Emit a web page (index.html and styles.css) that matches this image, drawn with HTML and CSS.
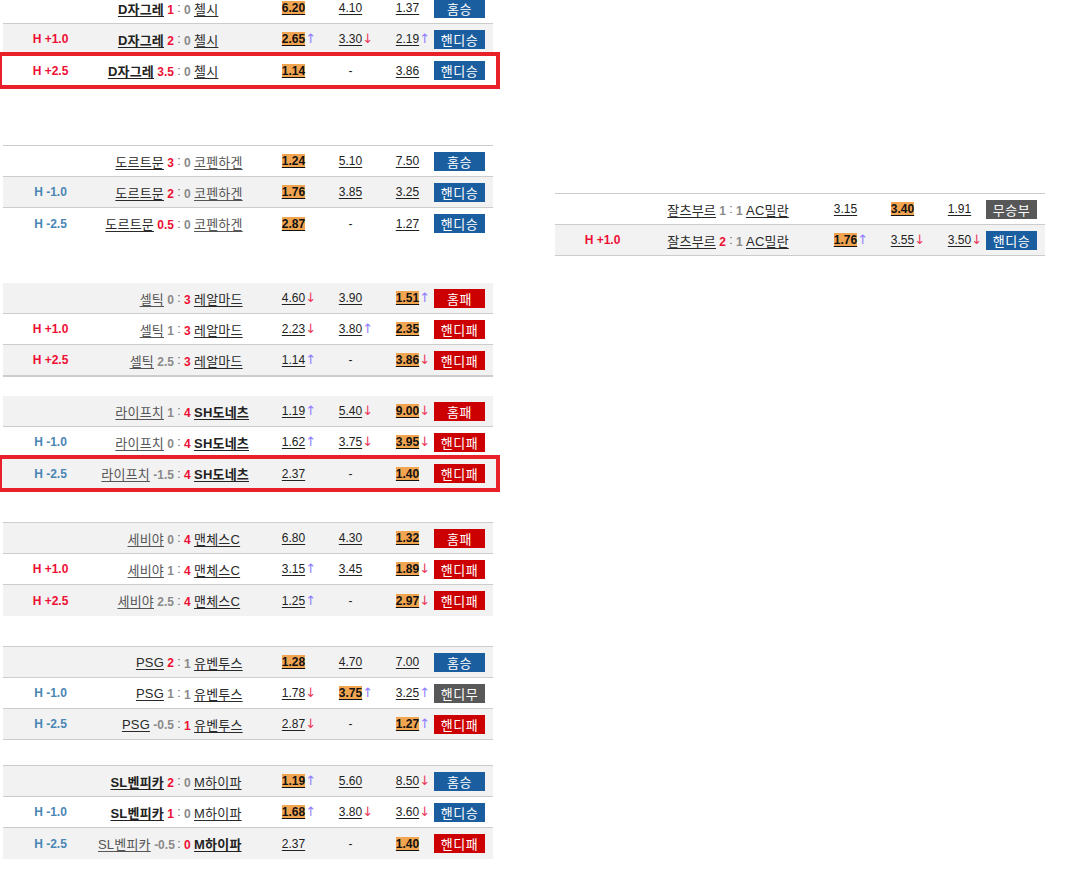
FILE: index.html
```html
<!DOCTYPE html>
<html lang="ko">
<head>
<meta charset="utf-8">
<title>경기 결과</title>
<link rel="stylesheet" href="styles.css">
</head>
<body>
<div class="page">
  <div class="col-left">

    <div class="blk blk-dz">
      <div class="row">
        <div class="hcap"></div>
        <div class="home"><span class="team w">D자그레</span> <b class="sc win">1</b></div>
        <div class="colon">:</div>
        <div class="away"><b class="sc">0</b> <span class="team">첼시</span></div>
        <div class="odd"><span class="v hl">6.20</span></div>
        <div class="odd"><span class="v">4.10</span></div>
        <div class="odd"><span class="v">1.37</span></div>
        <div class="res"><span class="badge blue">홈승</span></div>
      </div>
      <div class="row alt">
        <div class="hcap plus">H +1.0</div>
        <div class="home"><span class="team w">D자그레</span> <b class="sc win">2</b></div>
        <div class="colon">:</div>
        <div class="away"><b class="sc">0</b> <span class="team">첼시</span></div>
        <div class="odd"><span class="v hl">2.65</span><span class="up">↑</span></div>
        <div class="odd"><span class="v">3.30</span><span class="dn">↓</span></div>
        <div class="odd"><span class="v">2.19</span><span class="up">↑</span></div>
        <div class="res"><span class="badge blue">핸디승</span></div>
      </div>
      <div class="row last boxed">
        <div class="hcap plus">H +2.5</div>
        <div class="home"><span class="team w">D자그레</span> <b class="sc win">3.5</b></div>
        <div class="colon">:</div>
        <div class="away"><b class="sc">0</b> <span class="team">첼시</span></div>
        <div class="odd"><span class="v hl">1.14</span></div>
        <div class="odd"><span class="dash">-</span></div>
        <div class="odd"><span class="v">3.86</span></div>
        <div class="res"><span class="badge blue">핸디승</span></div>
      </div>
    </div>

    <div class="blk blk-dort">
      <div class="row">
        <div class="hcap"></div>
        <div class="home"><span class="team">도르트문</span> <b class="sc win">3</b></div>
        <div class="colon">:</div>
        <div class="away"><b class="sc">0</b> <span class="team lose">코펜하겐</span></div>
        <div class="odd"><span class="v hl">1.24</span></div>
        <div class="odd"><span class="v">5.10</span></div>
        <div class="odd"><span class="v">7.50</span></div>
        <div class="res"><span class="badge blue">홈승</span></div>
      </div>
      <div class="row alt">
        <div class="hcap minus">H -1.0</div>
        <div class="home"><span class="team">도르트문</span> <b class="sc win">2</b></div>
        <div class="colon">:</div>
        <div class="away"><b class="sc">0</b> <span class="team lose">코펜하겐</span></div>
        <div class="odd"><span class="v hl">1.76</span></div>
        <div class="odd"><span class="v">3.85</span></div>
        <div class="odd"><span class="v">3.25</span></div>
        <div class="res"><span class="badge blue">핸디승</span></div>
      </div>
      <div class="row last">
        <div class="hcap minus">H -2.5</div>
        <div class="home"><span class="team">도르트문</span> <b class="sc win">0.5</b></div>
        <div class="colon">:</div>
        <div class="away"><b class="sc">0</b> <span class="team lose">코펜하겐</span></div>
        <div class="odd"><span class="v hl">2.87</span></div>
        <div class="odd"><span class="dash">-</span></div>
        <div class="odd"><span class="v">1.27</span></div>
        <div class="res"><span class="badge blue">핸디승</span></div>
      </div>
    </div>

    <div class="blk blk-celtic">
      <div class="row alt">
        <div class="hcap"></div>
        <div class="home"><span class="team lose">셀틱</span> <b class="sc">0</b></div>
        <div class="colon">:</div>
        <div class="away"><b class="sc win">3</b> <span class="team">레알마드</span></div>
        <div class="odd"><span class="v">4.60</span><span class="dn">↓</span></div>
        <div class="odd"><span class="v">3.90</span></div>
        <div class="odd"><span class="v hl">1.51</span><span class="up">↑</span></div>
        <div class="res"><span class="badge red">홈패</span></div>
      </div>
      <div class="row">
        <div class="hcap plus">H +1.0</div>
        <div class="home"><span class="team lose">셀틱</span> <b class="sc">1</b></div>
        <div class="colon">:</div>
        <div class="away"><b class="sc win">3</b> <span class="team">레알마드</span></div>
        <div class="odd"><span class="v">2.23</span><span class="dn">↓</span></div>
        <div class="odd"><span class="v">3.80</span><span class="up">↑</span></div>
        <div class="odd"><span class="v hl">2.35</span></div>
        <div class="res"><span class="badge red">핸디패</span></div>
      </div>
      <div class="row alt thick">
        <div class="hcap plus">H +2.5</div>
        <div class="home"><span class="team lose">셀틱</span> <b class="sc">2.5</b></div>
        <div class="colon">:</div>
        <div class="away"><b class="sc win">3</b> <span class="team">레알마드</span></div>
        <div class="odd"><span class="v">1.14</span><span class="up">↑</span></div>
        <div class="odd"><span class="dash">-</span></div>
        <div class="odd"><span class="v hl">3.86</span><span class="dn">↓</span></div>
        <div class="res"><span class="badge red">핸디패</span></div>
      </div>
    </div>

    <div class="blk blk-leip">
      <div class="row alt">
        <div class="hcap"></div>
        <div class="home"><span class="team lose">라이프치</span> <b class="sc">1</b></div>
        <div class="colon">:</div>
        <div class="away"><b class="sc win">4</b> <span class="team w">SH도네츠</span></div>
        <div class="odd"><span class="v">1.19</span><span class="up">↑</span></div>
        <div class="odd"><span class="v">5.40</span><span class="dn">↓</span></div>
        <div class="odd"><span class="v hl">9.00</span><span class="dn">↓</span></div>
        <div class="res"><span class="badge red">홈패</span></div>
      </div>
      <div class="row">
        <div class="hcap minus">H -1.0</div>
        <div class="home"><span class="team lose">라이프치</span> <b class="sc">0</b></div>
        <div class="colon">:</div>
        <div class="away"><b class="sc win">4</b> <span class="team w">SH도네츠</span></div>
        <div class="odd"><span class="v">1.62</span><span class="up">↑</span></div>
        <div class="odd"><span class="v">3.75</span><span class="dn">↓</span></div>
        <div class="odd"><span class="v hl">3.95</span><span class="dn">↓</span></div>
        <div class="res"><span class="badge red">핸디패</span></div>
      </div>
      <div class="row alt last boxed">
        <div class="hcap minus">H -2.5</div>
        <div class="home"><span class="team lose">라이프치</span> <b class="sc">-1.5</b></div>
        <div class="colon">:</div>
        <div class="away"><b class="sc win">4</b> <span class="team w">SH도네츠</span></div>
        <div class="odd"><span class="v">2.37</span></div>
        <div class="odd"><span class="dash">-</span></div>
        <div class="odd"><span class="v hl">1.40</span></div>
        <div class="res"><span class="badge red">핸디패</span></div>
      </div>
    </div>

    <div class="blk blk-sev">
      <div class="row alt">
        <div class="hcap"></div>
        <div class="home"><span class="team lose">세비야</span> <b class="sc">0</b></div>
        <div class="colon">:</div>
        <div class="away"><b class="sc win">4</b> <span class="team">맨체스C</span></div>
        <div class="odd"><span class="v">6.80</span></div>
        <div class="odd"><span class="v">4.30</span></div>
        <div class="odd"><span class="v hl">1.32</span></div>
        <div class="res"><span class="badge red">홈패</span></div>
      </div>
      <div class="row">
        <div class="hcap plus">H +1.0</div>
        <div class="home"><span class="team lose">세비야</span> <b class="sc">1</b></div>
        <div class="colon">:</div>
        <div class="away"><b class="sc win">4</b> <span class="team">맨체스C</span></div>
        <div class="odd"><span class="v">3.15</span><span class="up">↑</span></div>
        <div class="odd"><span class="v">3.45</span></div>
        <div class="odd"><span class="v hl">1.89</span><span class="dn">↓</span></div>
        <div class="res"><span class="badge red">핸디패</span></div>
      </div>
      <div class="row alt last">
        <div class="hcap plus">H +2.5</div>
        <div class="home"><span class="team lose">세비야</span> <b class="sc">2.5</b></div>
        <div class="colon">:</div>
        <div class="away"><b class="sc win">4</b> <span class="team">맨체스C</span></div>
        <div class="odd"><span class="v">1.25</span><span class="up">↑</span></div>
        <div class="odd"><span class="dash">-</span></div>
        <div class="odd"><span class="v hl">2.97</span><span class="dn">↓</span></div>
        <div class="res"><span class="badge red">핸디패</span></div>
      </div>
    </div>

    <div class="blk blk-psg">
      <div class="row alt">
        <div class="hcap"></div>
        <div class="home"><span class="team">PSG</span> <b class="sc win">2</b></div>
        <div class="colon">:</div>
        <div class="away"><b class="sc">1</b> <span class="team">유벤투스</span></div>
        <div class="odd"><span class="v hl">1.28</span></div>
        <div class="odd"><span class="v">4.70</span></div>
        <div class="odd"><span class="v">7.00</span></div>
        <div class="res"><span class="badge blue">홈승</span></div>
      </div>
      <div class="row">
        <div class="hcap minus">H -1.0</div>
        <div class="home"><span class="team">PSG</span> <b class="sc">1</b></div>
        <div class="colon">:</div>
        <div class="away"><b class="sc">1</b> <span class="team">유벤투스</span></div>
        <div class="odd"><span class="v">1.78</span><span class="dn">↓</span></div>
        <div class="odd"><span class="v hl">3.75</span><span class="up">↑</span></div>
        <div class="odd"><span class="v">3.25</span><span class="up">↑</span></div>
        <div class="res"><span class="badge gray">핸디무</span></div>
      </div>
      <div class="row alt">
        <div class="hcap minus">H -2.5</div>
        <div class="home"><span class="team">PSG</span> <b class="sc">-0.5</b></div>
        <div class="colon">:</div>
        <div class="away"><b class="sc win">1</b> <span class="team">유벤투스</span></div>
        <div class="odd"><span class="v">2.87</span><span class="dn">↓</span></div>
        <div class="odd"><span class="dash">-</span></div>
        <div class="odd"><span class="v hl">1.27</span><span class="up">↑</span></div>
        <div class="res"><span class="badge red">핸디패</span></div>
      </div>
    </div>

    <div class="blk blk-ben">
      <div class="row alt">
        <div class="hcap"></div>
        <div class="home"><span class="team w">SL벤피카</span> <b class="sc win">2</b></div>
        <div class="colon">:</div>
        <div class="away"><b class="sc">0</b> <span class="team">M하이파</span></div>
        <div class="odd"><span class="v hl">1.19</span><span class="up">↑</span></div>
        <div class="odd"><span class="v">5.60</span></div>
        <div class="odd"><span class="v">8.50</span><span class="dn">↓</span></div>
        <div class="res"><span class="badge blue">홈승</span></div>
      </div>
      <div class="row">
        <div class="hcap minus">H -1.0</div>
        <div class="home"><span class="team w">SL벤피카</span> <b class="sc win">1</b></div>
        <div class="colon">:</div>
        <div class="away"><b class="sc">0</b> <span class="team">M하이파</span></div>
        <div class="odd"><span class="v hl">1.68</span><span class="up">↑</span></div>
        <div class="odd"><span class="v">3.80</span><span class="dn">↓</span></div>
        <div class="odd"><span class="v">3.60</span><span class="dn">↓</span></div>
        <div class="res"><span class="badge blue">핸디승</span></div>
      </div>
      <div class="row alt last">
        <div class="hcap minus">H -2.5</div>
        <div class="home"><span class="team lose">SL벤피카</span> <b class="sc">-0.5</b></div>
        <div class="colon">:</div>
        <div class="away"><b class="sc win">0</b> <span class="team w">M하이파</span></div>
        <div class="odd"><span class="v">2.37</span></div>
        <div class="odd"><span class="dash">-</span></div>
        <div class="odd"><span class="v hl">1.40</span></div>
        <div class="res"><span class="badge red">핸디패</span></div>
      </div>
    </div>

  </div>

  <div class="col-right">
    <div class="blk blk-salz">
      <div class="row">
        <div class="hcap"></div>
        <div class="home"><span class="team">잘츠부르</span> <b class="sc">1</b></div>
        <div class="colon">:</div>
        <div class="away"><b class="sc">1</b> <span class="team">AC밀란</span></div>
        <div class="odd"><span class="v">3.15</span></div>
        <div class="odd"><span class="v hl">3.40</span></div>
        <div class="odd"><span class="v">1.91</span></div>
        <div class="res"><span class="badge gray">무승부</span></div>
      </div>
      <div class="row alt">
        <div class="hcap plus">H +1.0</div>
        <div class="home"><span class="team">잘츠부르</span> <b class="sc win">2</b></div>
        <div class="colon">:</div>
        <div class="away"><b class="sc">1</b> <span class="team">AC밀란</span></div>
        <div class="odd"><span class="v hl">1.76</span><span class="up">↑</span></div>
        <div class="odd"><span class="v">3.55</span><span class="dn">↓</span></div>
        <div class="odd"><span class="v">3.50</span><span class="dn">↓</span></div>
        <div class="res"><span class="badge blue">핸디승</span></div>
      </div>
    </div>
  </div>
</div>
</body>
</html>
```

FILE: styles.css
```css
html, body {
  margin: 0;
  padding: 0;
  background: #fff;
}

body {
  font-family: "Liberation Sans", "Noto Sans CJK KR", sans-serif;
  font-size: 12px;
  color: #222;
}

.page {
  display: flex;
  align-items: flex-start;
  gap: 62px;
  padding-left: 3px;
}

.col-left,
.col-right {
  width: 490px;
  flex: none;
}

.col-right {
  margin-top: 193px;
}

/* blocks */
.blk-dz { margin-top: -7px; }
.blk-dort { margin-top: 59px; border-top: 1px solid #ccc; }
.blk-celtic { margin-top: 44px; }
.blk-leip { margin-top: 19px; }
.blk-sev { margin-top: 33px; border-top: 1px solid #ccc; }
.blk-psg { margin-top: 30px; border-top: 1px solid #ccc; }
.blk-ben { margin-top: 25px; border-top: 1px solid #ccc; }
.blk-salz { border-top: 1px solid #ccc; }

/* rows */
.row {
  display: grid;
  grid-template-columns: 95px 76px 10px 81px 57px 57px 57px 1fr;
  align-items: center;
  height: 30px;
  border-bottom: 1px solid #ccc;
  background: #fff;
}

.row.alt { background: #f2f2f2; }
.row.last { border-bottom: 0; height: 31px; }
.row.thick { border-bottom: 2px solid #ccc; }

.row.boxed {
  position: relative;
  outline: 4px solid #e8202a;
  outline-offset: -1px;
  margin: 0 -4px 0 -2px;
  padding: 0 4px 0 2px;
}

.hcap {
  text-align: center;
  font-weight: bold;
  font-size: 12px;
}
.hcap.plus { color: #ee0f34; }
.hcap.minus { color: #4a86b4; }

.home {
  text-align: right;
  white-space: nowrap;
}
.away {
  text-align: left;
  white-space: nowrap;
}
.colon {
  text-align: center;
  color: #666;
}

.team {
  color: #2a2a2a;
  font-size: 13px;
  letter-spacing: 0.2px;
  text-decoration: underline;
  text-underline-offset: 2px;
}
.team.w { font-weight: bold; color: #222; }
.team.lose { color: #555; }

.sc {
  color: #8a8a8a;
  font-weight: bold;
}
.sc.win { color: #ee0f34; }

.odd {
  text-align: center;
  white-space: nowrap;
}

.v {
  color: #222;
  text-decoration: underline;
  text-underline-offset: 2px;
}
.v.hl {
  background: #f2a551;
  font-weight: bold;
  color: #111;
}

.dash { color: #222; }

.up,
.dn {
  display: inline-block;
  width: 0;
  overflow: visible;
  font-family: "DejaVu Sans", sans-serif;
  font-size: 13px;
  line-height: 1;
}
.up { color: #8f7dff; }
.dn { color: #ec3a5a; }

.res {
  display: flex;
  justify-content: flex-start;
  margin-left: -2px;
}

.badge {
  display: flex;
  align-items: center;
  justify-content: center;
  width: 51px;
  height: 19px;
  color: #fff;
  font-size: 13px;
  letter-spacing: 0.5px;
}
.badge.blue { background: #1b5e9f; }
.badge.red { background: #cc0000; }
.badge.gray { background: #585858; }
```
